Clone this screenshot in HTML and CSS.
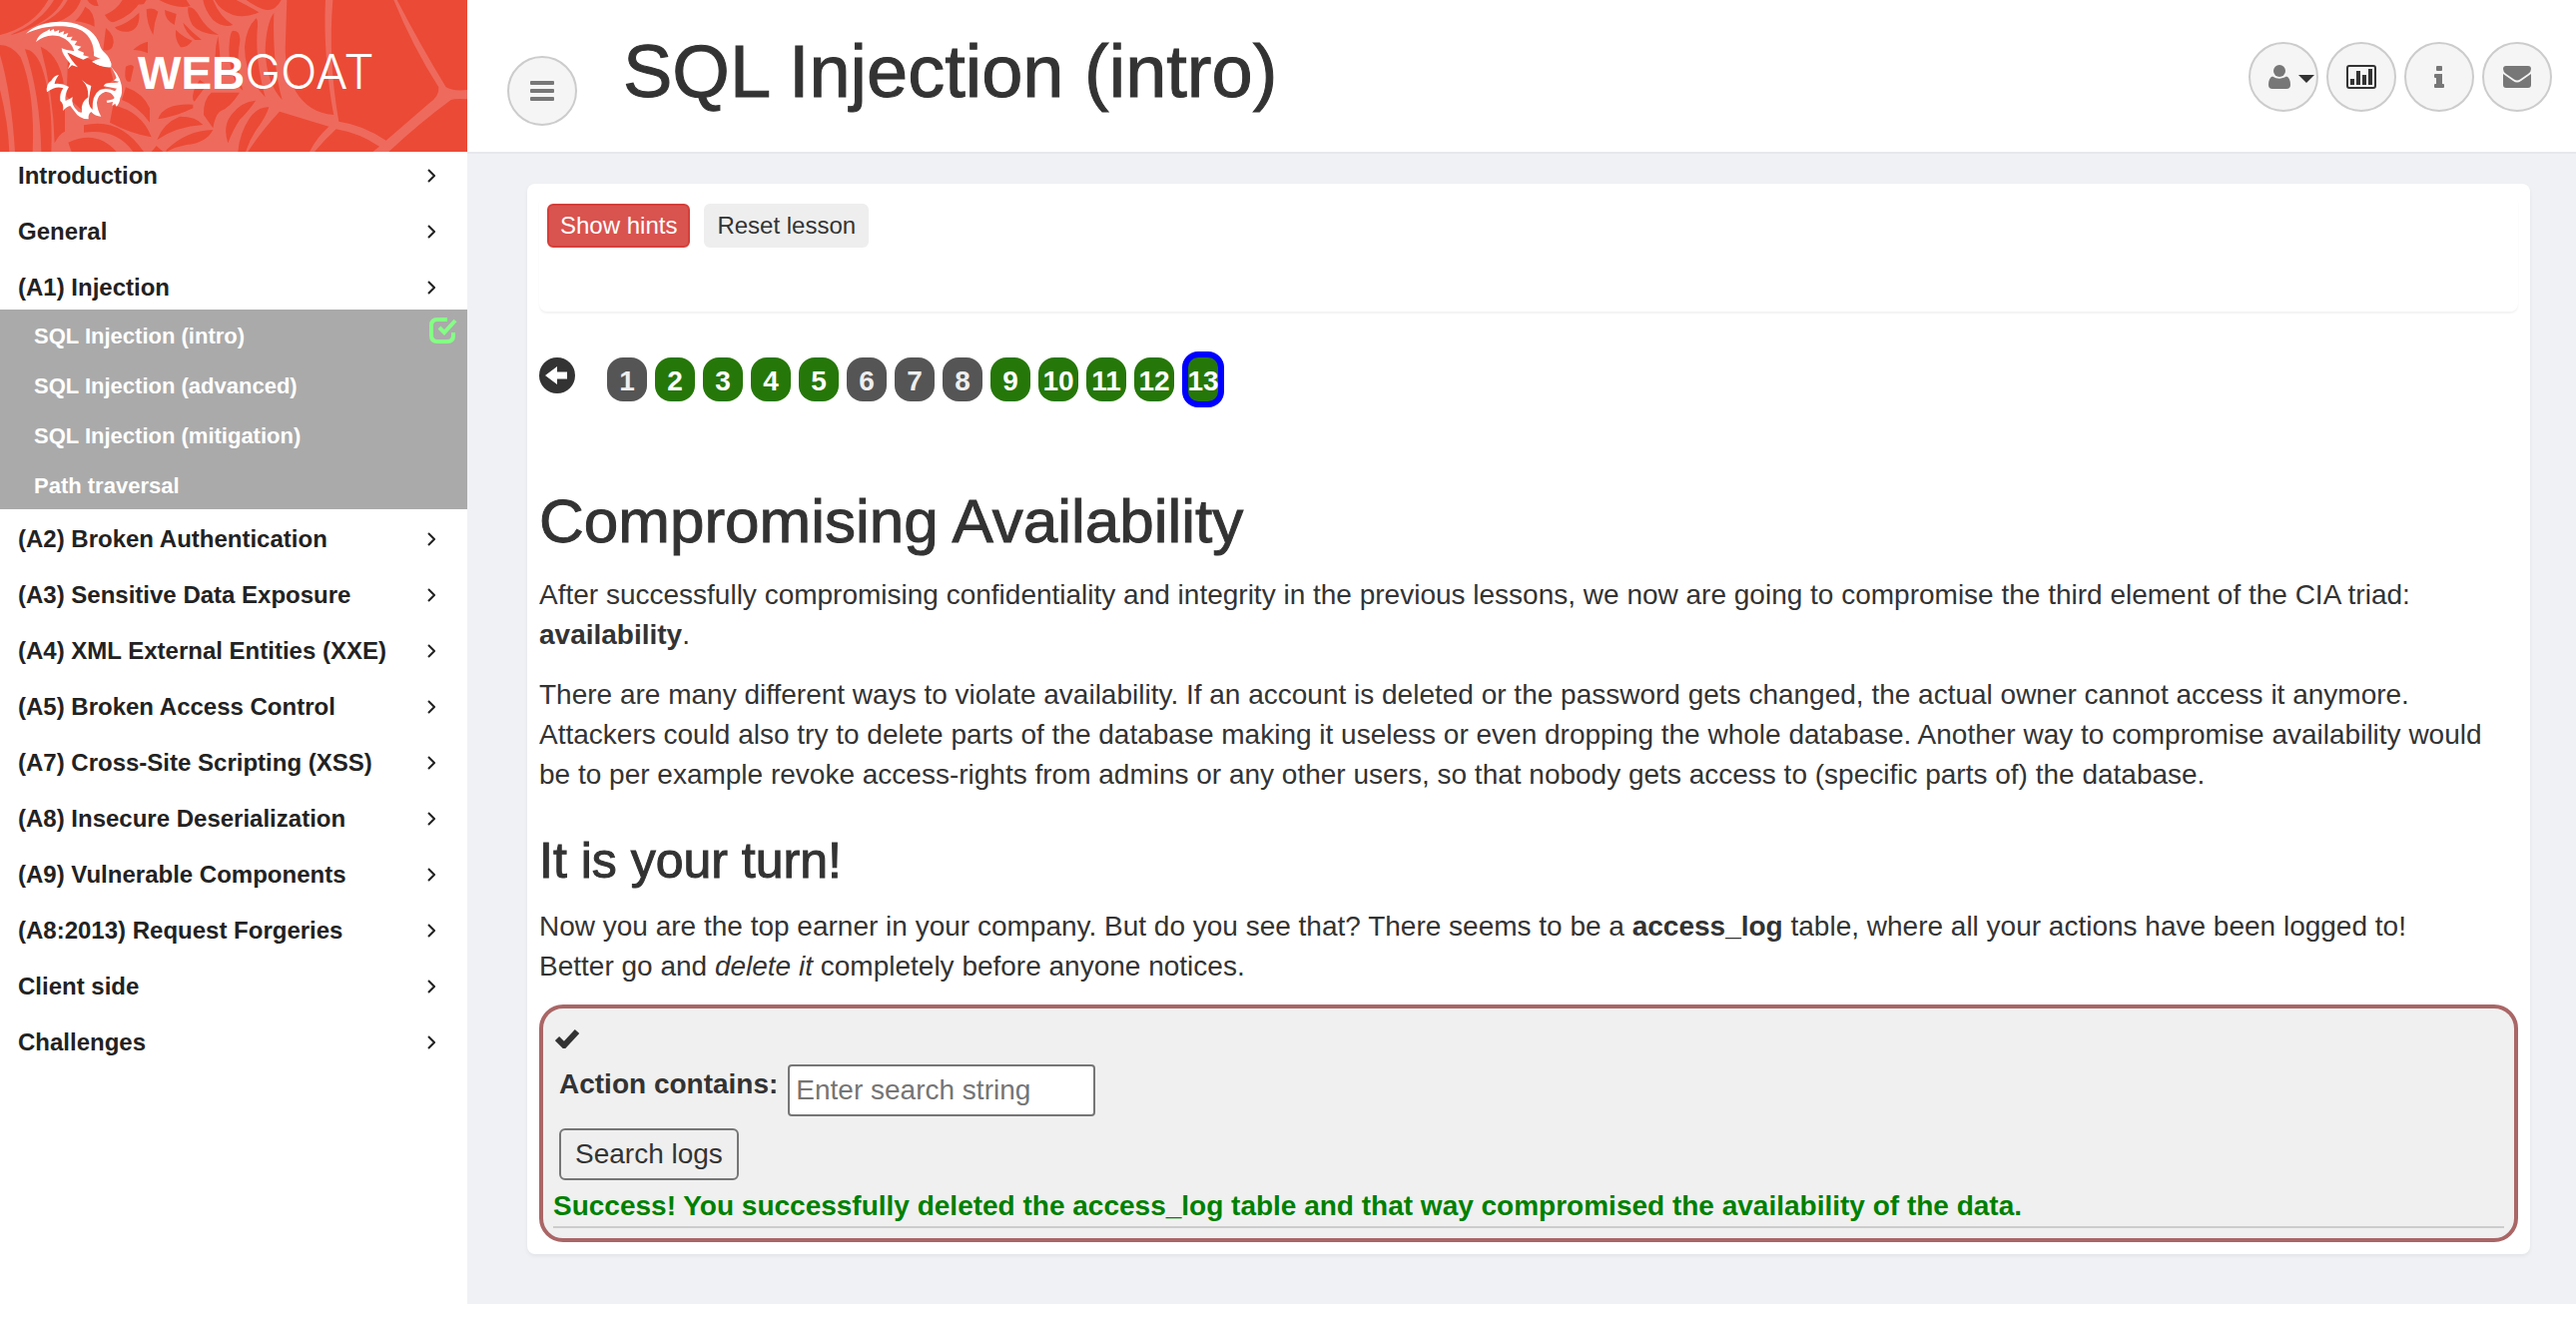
FILE: index.html
```html
<!DOCTYPE html>
<html lang="en">
<head>
<meta charset="utf-8">
<title>WebGoat</title>
<link rel="stylesheet" href="styles.css">
</head>
<body>
<svg class="sprite" aria-hidden="true">
  <symbol id="chevron" viewBox="0 0 8 14"><path d="M1 1l6 6-6 6" fill="none" stroke="#222" stroke-width="2"/></symbol>
</svg>
<div class="app">
  <aside class="sidebar">
    <a class="brand" href="#">
      <svg class="web" viewBox="0 0 1404 456" preserveAspectRatio="xMinYMin slice" aria-hidden="true">
        <rect width="1404" height="456" fill="#ee6a5d"/>
        <g fill="#eb4a36">
          <path d="M0 0H145Q100 80 0 105Z"/>
          <path d="M162 0H190Q160 60 60 97Q40 105 32 104Q125 65 162 0Z"/>
          <path d="M203 0H243Q225 50 170 66Q130 66 95 82Q175 55 203 0Z"/>
          <path d="M256 20Q286 35 284 80Q255 66 225 64Q245 45 256 20Z"/>
          <path d="M262 0H290L296 18Q275 20 262 0ZM315 45Q350 30 368 0H425Q400 45 345 65Q330 72 315 45Z"/>
          <path d="M345 82Q385 70 418 38Q422 88 385 95Q355 97 345 82ZM318 84Q350 110 338 140Q330 155 310 150Z"/>
          <path d="M0 270Q25 370 28 456H0ZM0 135Q35 135 62 172Q106 280 98 456H45Q34 280 0 165Z"/>
          <path d="M75 148Q105 150 125 200Q160 300 154 456H124Q120 280 75 148ZM122 140Q190 170 195 290V395Q178 402 164 430Q160 280 122 140Z"/>
          <path d="M205 150Q270 180 330 200L340 240Q300 270 280 325L262 345L200 290Z"/>
          <path d="M378 200Q395 190 402 200L392 245Q370 250 378 200ZM400 150Q420 130 444 125V160Q420 150 400 150Z"/>
          <path d="M378 262Q430 280 450 325V368Q410 315 366 300ZM340 316Q425 335 455 412Q390 400 330 368ZM252 376Q360 350 432 456H400Q350 385 252 398ZM205 428Q290 388 350 456H215Z"/>
          <path d="M385 0H440L432 12Q400 18 385 0ZM478 0H560L572 18Q530 28 478 0ZM440 28Q460 20 475 35Q462 70 460 105Q440 70 440 28ZM495 30L530 42L524 75Q495 60 495 30Z"/>
          <path d="M528 90Q555 115 578 122Q560 145 542 141Q525 120 528 90ZM550 68Q575 95 606 120L586 120Q555 95 550 68Z"/>
          <path d="M565 22Q582 18 600 50Q620 85 657 105Q600 102 578 75Q562 45 565 22ZM610 0H640Q660 50 700 75Q670 85 640 60Q615 30 610 0ZM645 0H710Q750 20 778 37Q740 55 700 45Q660 30 645 0ZM740 0H845Q825 38 790 28Q760 15 740 0Z"/>
          <path d="M655 108Q665 180 662 265Q635 180 655 108ZM700 92Q726 92 720 130C712 180 715 220 730 272Q690 240 688 150Q690 95 700 92ZM770 55Q776 60 773 90C768 160 780 230 797 292Q735 230 735 140Q740 80 770 55ZM823 38C820 120 825 220 848 300Q800 250 797 150Q800 70 823 38Z"/>
          <path d="M475 358Q490 310 580 314V325Q530 350 475 358ZM472 420Q490 370 540 350Q590 350 610 375Q530 380 472 420ZM500 450Q560 392 640 390Q620 430 560 435Q530 440 500 456ZM470 438L490 456H455Z"/>
          <path d="M580 300Q575 275 600 240L622 255Q610 270 584 305ZM612 345Q610 300 635 278L720 278Q690 325 660 335Q645 350 640 385Z"/>
          <path d="M685 430Q668 380 695 345Q725 305 768 302Q750 330 720 360Q700 390 685 430ZM715 456Q720 400 750 355Q775 320 808 322Q800 350 770 390Q750 420 738 456Z"/>
          <path d="M862 0H978C972 120 985 250 1003 345C900 338 850 240 858 120Z"/>
          <path d="M1000 0H1183Q1240 140 1318 262Q1320 290 1290 310L1160 422Q1090 375 1018 365Q985 180 1000 0Z"/>
          <path d="M1193 0H1404V270Q1360 275 1340 262Q1260 130 1193 0ZM1404 298Q1370 295 1355 300Q1260 370 1168 456H1404Z"/>
          <path d="M1010 388Q1080 400 1140 440L1120 456H945Q975 420 1010 388ZM840 335L988 380Q950 415 930 456H745Q780 400 840 335Z"/>
        </g>
        <g fill="#fff">
          <path d="M78 101C110 70 165 60 215 68C262 78 290 103 299 133Q303 150 316 160Q333 175 333 198Q310 202 292 194Q280 186 276 186Q290 180 302 177L282 168C284 138 272 108 246 92C210 72 130 74 78 101Z"/>
          <path d="M108 126Q114 102 142 92L149 87L150 94L161 87L164 95L178 90L176 100L193 93L190 104L205 99L200 112L218 110L212 121L232 123L224 135L244 140L233 150L252 158L250 166L268 171L250 179L232 172Q212 160 202 158Q212 178 234 202L216 196L204 207L211 191Q187 165 185 145Q205 154 223 153Q214 122 178 109Q140 99 108 126Z"/>
          <path d="M277 185Q303 170 328 181Q338 190 333 202Q305 204 277 185ZM295 185Q308 194 324 191Q318 180 295 185Z" fill-rule="evenodd"/>
          <path d="M330 195Q342 212 350 220Q362 238 365 256Q369 280 361 295Q359 312 350 320L346 311L337 318L339 306L322 309L320 302Q340 300 344 294Q335 274 316 276Q295 282 291 308Q292 330 304 350Q286 350 274 336Q264 343 266 358Q238 358 222 332L211 318Q201 320 189 333Q193 312 181 303Q178 281 190 265Q168 256 141 277Q137 252 154 242Q164 226 177 225Q165 241 164 252Q186 249 207 261Q193 284 197 303Q214 296 218 291Q212 316 235 335Q247 341 246 335Q241 308 265 292Q267 260 246 240Q260 254 274 258Q270 277 268 292Q262 316 278 330Q276 285 300 270Q322 262 345 274L351 266Q333 263 311 259Q315 247 337 249Q354 250 358 245L342 242L350 234Q345 218 330 195Z"/>
        </g>
      </svg>
      <span class="wordmark"><b>WEB</b><span>GOAT</span></span>
    </a>
    <nav>
      <ul class="menu">
        <li><a href="#">Introduction<svg class="chev"><use href="#chevron"/></svg></a></li>
        <li><a href="#">General<svg class="chev"><use href="#chevron"/></svg></a></li>
        <li class="open"><a href="#">(A1) Injection<svg class="chev"><use href="#chevron"/></svg></a>
          <ul class="submenu">
            <li><a href="#">SQL Injection (intro)</a>
              <svg class="done" viewBox="0 0 28 26" role="img" aria-label="Completed"><path d="M18 2H8Q2 2 2 8v10q0 6 6 6h10q6 0 6-6v-3" fill="none" stroke="#85ff85" stroke-width="4"/><path d="M10 10l5 5L26 3" fill="none" stroke="#85ff85" stroke-width="4"/></svg></li>
            <li><a href="#">SQL Injection (advanced)</a></li>
            <li><a href="#">SQL Injection (mitigation)</a></li>
            <li><a href="#">Path traversal</a></li>
          </ul>
        </li>
        <li><a href="#">(A2) Broken Authentication<svg class="chev"><use href="#chevron"/></svg></a></li>
        <li><a href="#">(A3) Sensitive Data Exposure<svg class="chev"><use href="#chevron"/></svg></a></li>
        <li><a href="#">(A4) XML External Entities (XXE)<svg class="chev"><use href="#chevron"/></svg></a></li>
        <li><a href="#">(A5) Broken Access Control<svg class="chev"><use href="#chevron"/></svg></a></li>
        <li><a href="#">(A7) Cross-Site Scripting (XSS)<svg class="chev"><use href="#chevron"/></svg></a></li>
        <li><a href="#">(A8) Insecure Deserialization<svg class="chev"><use href="#chevron"/></svg></a></li>
        <li><a href="#">(A9) Vulnerable Components<svg class="chev"><use href="#chevron"/></svg></a></li>
        <li><a href="#">(A8:2013) Request Forgeries<svg class="chev"><use href="#chevron"/></svg></a></li>
        <li><a href="#">Client side<svg class="chev"><use href="#chevron"/></svg></a></li>
        <li><a href="#">Challenges<svg class="chev"><use href="#chevron"/></svg></a></li>
      </ul>
    </nav>
  </aside>

  <div class="page">
    <header class="topbar">
      <button class="round toggle" type="button" aria-label="Toggle menu">
        <svg width="24" height="20" viewBox="0 0 24 20" fill="#777"><rect width="24" height="4" rx="1"/><rect y="8" width="24" height="4" rx="1"/><rect y="16" width="24" height="4" rx="1"/></svg>
      </button>
      <h1>SQL Injection (intro)</h1>
      <div class="tools">
        <button class="round user" type="button" aria-label="User">
          <svg width="46" height="24" viewBox="0 0 46 24"><g fill="#777"><circle cx="11" cy="6" r="6"/><path d="M4 11.500Q11 16 18 11.500Q22 13 22 20Q22 24 18 24H4Q0 24 0 20Q0 13 4 11.500Z"/></g><path d="M30 10h16l-8 8z" fill="#333"/></svg>
        </button>
        <button class="round" type="button" aria-label="Report card">
          <svg width="30" height="24" viewBox="0 0 30 24"><rect x="1" y="1" width="28" height="22" rx="2" fill="none" stroke="#333" stroke-width="2"/><path d="M4 14h4v6H4zM10 6h4v14h-4zM16 10h4v10h-4zM22 4h4v16h-4z" fill="#333"/></svg>
        </button>
        <button class="round" type="button" aria-label="About">
          <svg width="10" height="22" viewBox="0 0 10 22" fill="#777"><rect x="2" width="6" height="5" rx="1"/><path d="M1 8h7v10h1q1 0 1 1v2q0 1-1 1H1q-1 0-1-1v-2q0-1 1-1h1v-6H1q-1 0-1-1V9q0-1 1-1z"/></svg>
        </button>
        <button class="round" type="button" aria-label="Contact">
          <svg width="28" height="22" viewBox="0 0 28 22" fill="#777"><path d="M3 0h22q3 0 3 3 0 3-3 5l-8 5.500q-3 2-6 0L3 8Q0 6 0 3 0 0 3 0z"/><path d="M0 8l10 7q4 3 8 0l10-7v11q0 3-3 3H3q-3 0-3-3z"/></svg>
        </button>
      </div>
    </header>

    <main class="content">
      <section class="card">
        <div class="controls">
          <button class="btn danger" type="button">Show hints</button>
          <button class="btn" type="button">Reset lesson</button>
        </div>
        <nav class="pager" aria-label="Lesson pages">
          <a class="prev" href="#" aria-label="Previous page"><svg width="36" height="36" viewBox="0 0 36 36"><circle cx="18" cy="18" r="18" fill="#333"/><path d="M6 18L18 9v5.500h10v7H18V27z" fill="#fff"/></svg></a>
          <a class="pill" href="#">1</a>
          <a class="pill solved" href="#">2</a>
          <a class="pill solved" href="#">3</a>
          <a class="pill solved" href="#">4</a>
          <a class="pill solved" href="#">5</a>
          <a class="pill" href="#">6</a>
          <a class="pill" href="#">7</a>
          <a class="pill" href="#">8</a>
          <a class="pill solved" href="#">9</a>
          <a class="pill solved" href="#">10</a>
          <a class="pill solved" href="#">11</a>
          <a class="pill solved" href="#">12</a>
          <a class="pill solved current" href="#" aria-current="page">13</a>
        </nav>
        <article class="lesson">
          <h2>Compromising Availability</h2>
          <p>After successfully compromising confidentiality and integrity in the previous lessons, we now are going to compromise the third element of the CIA triad: <strong>availability</strong>.</p>
          <p>There are many different ways to violate availability. If an account is deleted or the password gets changed, the actual owner cannot access it anymore. Attackers could also try to delete parts of the database making it useless or even dropping the whole database. Another way to compromise availability would be to per example revoke access-rights from admins or any other users, so that nobody gets access to (specific parts of) the database.</p>
          <h3>It is your turn!</h3>
          <p>Now you are the top earner in your company. But do you see that? There seems to be a <strong>access_log</strong> table, where all your actions have been logged to!<br>Better go and <em>delete it</em> completely before anyone notices.</p>
        </article>
        <form class="attack">
          <svg class="tick" width="24" height="20" viewBox="0 0 24 20"><path d="M2 10l7 7L22 3" fill="none" stroke="#333" stroke-width="6"/></svg>
          <div class="field">
            <label for="action">Action contains:</label>
            <input id="action" type="text" placeholder="Enter search string">
          </div>
          <button class="search" type="button">Search logs</button>
          <output>Success! You successfully deleted the access_log table and that way compromised the availability of the data.</output>
        </form>
      </section>
    </main>
  </div>
</div>
</body>
</html>
```
FILE: styles.css
```css
* { box-sizing: border-box; }

body {
  margin: 0;
  background: #fff;
  color: #333;
  font: 28px/40px "Liberation Sans", Arial, sans-serif;
}

a { color: inherit; text-decoration: none; }
ul { list-style: none; margin: 0; padding: 0; }
button, input { font: inherit; color: inherit; }
svg { display: block; flex: none; }
.sprite { width: 0; height: 0; position: absolute; }

.app { display: flex; align-items: flex-start; }
.sidebar { flex: 0 0 468px; }
.page { flex: 1; min-width: 0; }

/* Brand */
.brand {
  position: relative;
  display: flex;
  align-items: center;
  height: 152px;
  padding: 0 0 8px 138px;
  overflow: hidden;
  color: #fff;
}
.web { position: absolute; inset: 0; width: 100%; height: 100%; }
.wordmark { position: relative; display: flex; align-items: baseline; font-size: 46px; line-height: 48px; }
.wordmark span { font-family: Inter, "Liberation Sans", sans-serif; font-size: 48px; font-weight: 300; }

/* Side menu */
.menu { padding-top: 2px; font-size: 24px; font-weight: bold; color: #222; }
.menu > li { margin-bottom: 12px; }
.menu > li > a {
  display: flex;
  align-items: center;
  justify-content: space-between;
  height: 44px;
  padding: 0 32px 0 18px;
}
.chev { width: 8px; height: 14px; }
.menu > .open { margin-bottom: 8px; }
.submenu { background: #aaa; color: #fff; font-size: 22px; }
.submenu li {
  display: flex;
  justify-content: space-between;
  height: 50px;
  padding: 8px 10px 0 34px;
  line-height: 38px;
}
.done { width: 28px; height: 26px; }

/* Top bar */
.topbar {
  display: flex;
  align-items: flex-start;
  height: 154px;
  padding: 0 24px 0 40px;
  border-bottom: 2px solid #e7e8ec;
}
.round {
  display: flex;
  align-items: center;
  justify-content: center;
  width: 70px;
  height: 70px;
  padding: 0;
  border: 2px solid #ccc;
  border-radius: 50%;
  background: #f5f5f5;
}
.toggle { margin-top: 56px; }
.topbar h1 { flex: 1; margin: 32px 0 0 46px; font-size: 74px; line-height: 80px; font-weight: 400; -webkit-text-stroke: 1px; }
.tools { display: flex; gap: 8px; margin-top: 42px; }
.user { justify-content: flex-end; padding-right: 2px; }

/* Lesson card */
.content { padding: 30px 46px 50px 60px; background: #f0f1f5; }
.card {
  padding: 12px;
  border-radius: 8px;
  background: #fff;
  box-shadow: 0 2px 4px rgba(0, 0, 0, .06);
}
.controls {
  display: flex;
  align-items: flex-start;
  gap: 14px;
  height: 116px;
  padding: 8px;
  border-radius: 8px;
  box-shadow: 0 2px 2px rgba(0, 0, 0, .05);
}
.btn {
  height: 44px;
  padding: 0 11px;
  border: 2px solid #eee;
  border-radius: 6px;
  background: #eee;
  font-size: 24px;
  line-height: 36px;
}
.danger { border-color: #d43f3a; background: #d9534f; color: #fff; }

.pager { display: flex; align-items: center; gap: 8px; margin-top: 40px; }
.prev { margin: 0 24px 8px 0; }
.pill {
  width: 40px;
  height: 44px;
  padding-top: 2px;
  border-radius: 16px;
  background: #555;
  color: #eee;
  font-weight: bold;
  line-height: 44px;
  text-align: center;
}
.solved { background: #267709; color: #fff; }
.current {
  display: flex;
  justify-content: center;
  width: 42px;
  height: 56px;
  border: 6px solid #00f;
}

.lesson h2, .lesson h3 { font-weight: 400; -webkit-text-stroke: 1px; }
.lesson h2 { margin: 80px 0 20px; font-size: 62px; line-height: 68px; }
.lesson h3 { margin: 40px 0 20px; font-size: 50px; line-height: 52px; }
.lesson p { margin: 0 0 20px; }
.lesson p:last-child { margin-bottom: 18px; }

/* Assignment box */
.attack {
  display: flex;
  flex-direction: column;
  align-items: flex-start;
  padding: 20px 10px 10px;
  border: 4px solid #a66;
  border-radius: 24px;
  background: #f0f0f0;
}
.tick { margin-left: 2px; }
.field { display: flex; align-items: flex-start; gap: 10px; margin: 16px 0 12px 6px; }
.field label { font-weight: bold; }
.field input {
  width: 308px;
  height: 52px;
  padding: 0 6px;
  border: 2px solid #767676;
  border-radius: 4px;
  background: #fff;
}
.field input::placeholder { color: #757575; }
.search {
  height: 52px;
  margin-left: 6px;
  padding: 0 14px;
  border: 2px solid #767676;
  border-radius: 6px;
  background: #efefef;
}
.attack output {
  align-self: stretch;
  margin-top: 6px;
  border-bottom: 2px solid #ccc;
  color: #008000;
  font-weight: bold;
}
```
